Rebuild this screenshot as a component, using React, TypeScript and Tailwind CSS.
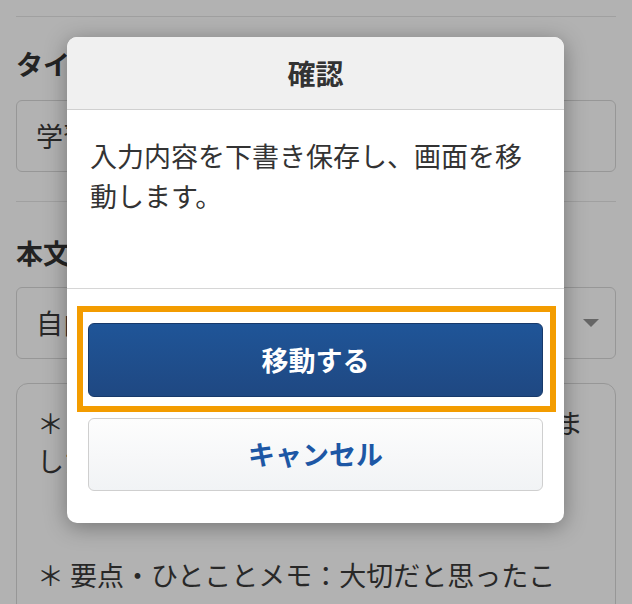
export default function App() {
  return (
    <div
      className="relative h-[604px] w-[632px] overflow-hidden bg-white text-[27px] text-[#3a3a3a]"
      style={{ fontFamily: '"Noto Sans CJK JP", "Noto Sans", sans-serif' }}
    >
      {/* form behind the dialog */}
      <div className="px-4 pt-4">
        <div className="border-t border-[#e5e5e5]" />

        <div className="pt-[29px] pb-[29px]">
          <div className="h-[36px] leading-[36px] font-bold text-[#333]">タイトル</div>
          <div className="mt-[18px] flex h-[72px] items-center rounded-[6px] border border-[#d9d9d9] px-[19px]">
            学習メモ
          </div>
        </div>

        <div className="border-t border-[#e5e5e5]" />

        <div className="pt-[33px]">
          <div className="h-[36px] leading-[36px] font-bold text-[#333]">本文テンプレート</div>
          <div className="mt-[16px] flex h-[72px] items-center justify-between rounded-[6px] border border-[#d9d9d9] pl-[19px] pr-[16px]">
            <span>自由記述</span>
            <span className="h-0 w-0 border-x-[8px] border-t-[8px] border-x-transparent border-t-[#929292]" />
          </div>
          <div className="mt-[24px] h-[260px] rounded-[12px] border border-[#d9d9d9] px-[20px] pt-[20px] leading-[38px] whitespace-pre-wrap">
            {'＊ 学んだこと：授業で学んだ内容を整理しました\n\n\n＊ 要点・ひとことメモ：大切だと思ったこ'}
          </div>
        </div>
      </div>

      {/* backdrop */}
      <div className="absolute inset-0 bg-black/30" />

      {/* dialog */}
      <div className="absolute left-[67px] top-[37px] w-[497px] overflow-hidden rounded-[10px] bg-white shadow-[0_4px_22px_rgba(0,0,0,0.35)]">
        <div className="flex h-[73px] items-center justify-center border-b border-[#d0d0d0] bg-[#f0f0f0] text-[28px] font-bold text-[#333]">
          確認
        </div>
        <div className="px-[23px] pt-[26px] pb-[72px] leading-[40px] text-[#333]">
          入力内容を下書き保存し、画面を移動します。
        </div>
        <div className="flex flex-col gap-[21px] border-t border-[#d6d6d6] px-[21px] pt-[34px] pb-[32px]">
          <div className="relative">
            <span className="absolute -left-[11px] -right-[13px] -top-[17px] -bottom-[15px] border-[6px] border-[#f39c00]" />
            <button className="relative flex h-[74px] w-full items-center justify-center rounded-[6px] border border-[#17396a] bg-gradient-to-b from-[#1f5598] to-[#1f4882] font-bold text-white">
              移動する
            </button>
          </div>
          <button className="flex h-[73px] w-full items-center justify-center rounded-[6px] border border-[#cfcfcf] bg-gradient-to-b from-[#fdfdfd] to-[#f1f3f5] font-bold text-[#1d57a5]">
            キャンセル
          </button>
        </div>
      </div>
    </div>
  )
}
